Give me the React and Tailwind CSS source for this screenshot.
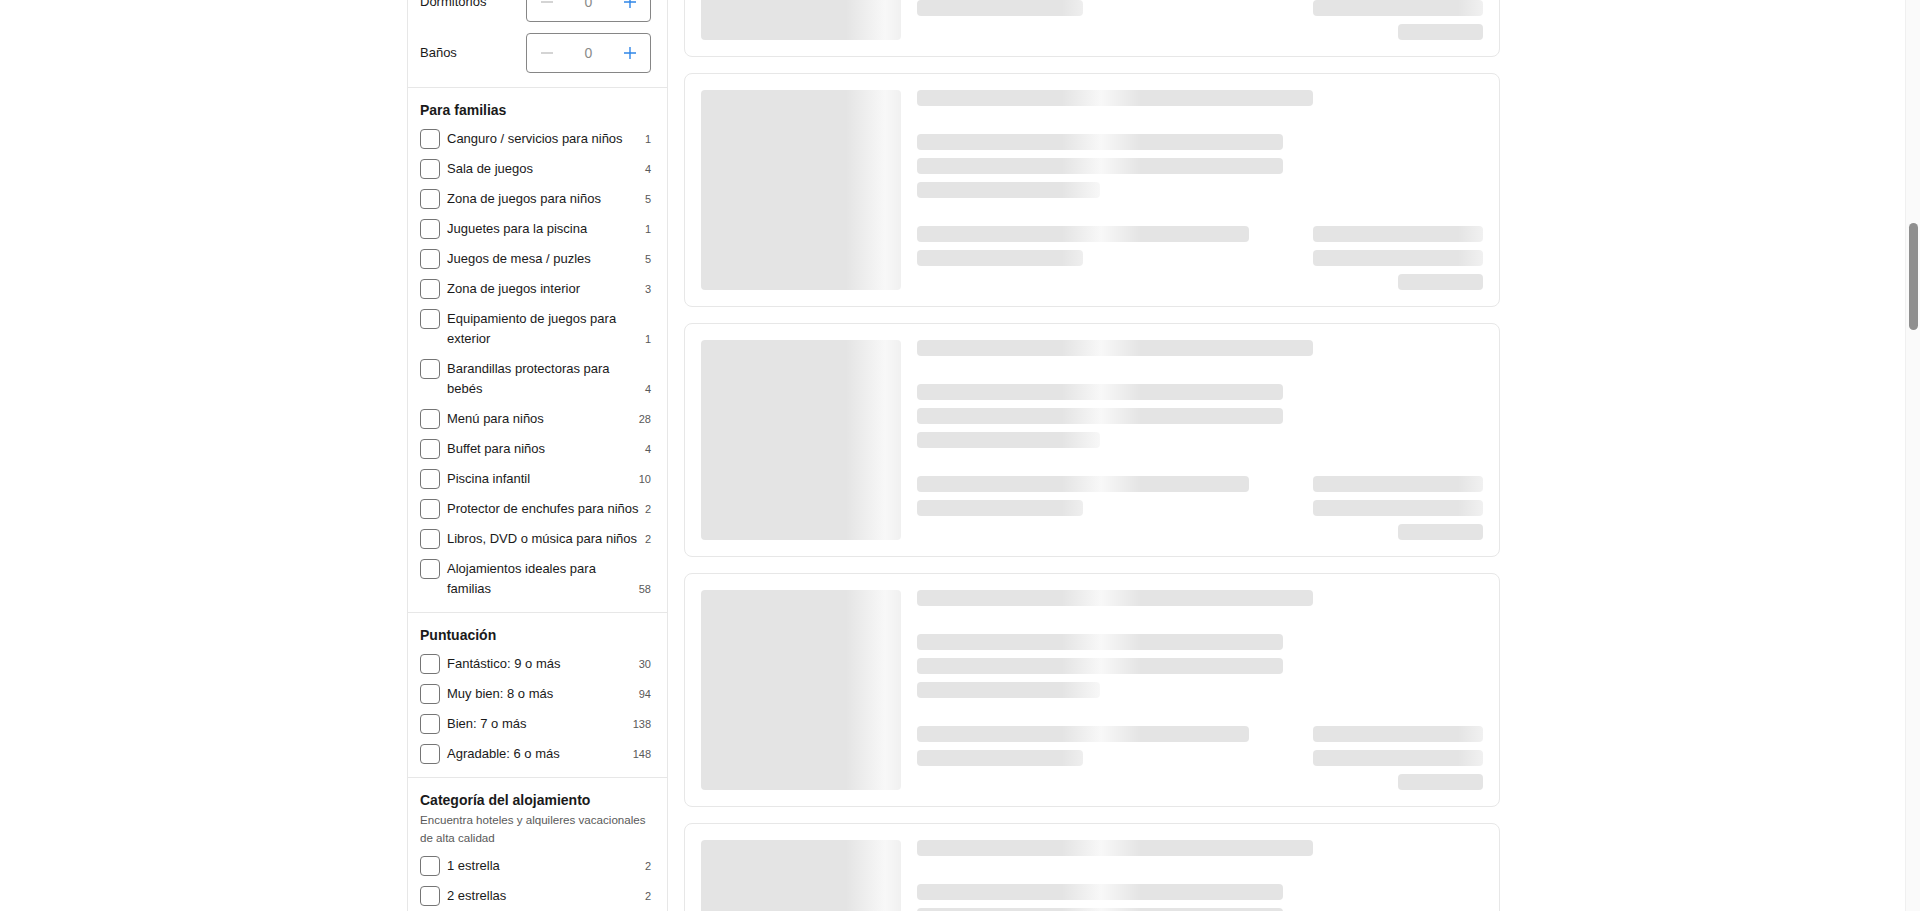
import React from "react";

const shimmer =
  "bg-[linear-gradient(90deg,#e4e4e4_0px,#e4e4e4_145px,#f8f8f8_184px,#e4e4e4_224px,#e4e4e4_100%)]";

const familias = [
  ["Canguro / servicios para niños", 1],
  ["Sala de juegos", 4],
  ["Zona de juegos para niños", 5],
  ["Juguetes para la piscina", 1],
  ["Juegos de mesa / puzles", 5],
  ["Zona de juegos interior", 3],
  ["Equipamiento de juegos para exterior", 1],
  ["Barandillas protectoras para bebés", 4],
  ["Menú para niños", 28],
  ["Buffet para niños", 4],
  ["Piscina infantil", 10],
  ["Protector de enchufes para niños", 2],
  ["Libros, DVD o música para niños", 2],
  ["Alojamientos ideales para familias", 58],
];

const puntuacion = [
  ["Fantástico: 9 o más", 30],
  ["Muy bien: 8 o más", 94],
  ["Bien: 7 o más", 138],
  ["Agradable: 6 o más", 148],
];

const categoria = [
  ["1 estrella", 2],
  ["2 estrellas", 2],
  ["3 estrellas", 14],
  ["4 estrellas", 31],
];

const Stepper = ({ label }) => (
  <div className="flex items-center justify-between">
    <span className="text-[13px] leading-5 text-[#1a1a1a]">{label}</span>
    <div className="flex h-10 w-[125px] items-center rounded-[4px] border border-[#868686]">
      <div className="flex w-10 justify-center">
        <svg width="14" height="14" viewBox="0 0 14 14">
          <path d="M1 7h12" stroke="#c2c2c2" strokeWidth="1.4" />
        </svg>
      </div>
      <div className="flex-1 text-center text-[14px] text-[#8a8a8a]">0</div>
      <div className="flex w-10 justify-center">
        <svg width="14" height="14" viewBox="0 0 14 14">
          <path d="M1 7h12M7 1v12" stroke="#2f86e8" strokeWidth="1.4" />
        </svg>
      </div>
    </div>
  </div>
);

const CheckRow = ({ label, count }) => (
  <label className="flex items-start gap-[7px]">
    <span className="h-5 w-5 shrink-0 rounded-[4px] border border-[#757575] bg-white" />
    <span className="flex flex-1 items-end justify-between">
      <span className="text-[13px] leading-5 text-[#1a1a1a]">{label}</span>
      <span className="shrink-0 pl-1 text-[11px] leading-5 text-[#595959]">{count}</span>
    </span>
  </label>
);

const FilterGroup = ({ title, desc, items, last }) => (
  <div className={`pl-3 pr-4 pt-3 ${last ? "pb-10" : "border-b border-[#e7e7e7] pb-[13px]"}`}>
    <h3 className="text-[14px] font-bold leading-5 text-[#1a1a1a]">{title}</h3>
    {desc && (
      <p className="mt-px text-[11.6px] leading-[18px] text-[#595959]">{desc}</p>
    )}
    <div className="mt-[9px] flex flex-col gap-[10px]">
      {items.map(([l, c]) => (
        <CheckRow key={l} label={l} count={c} />
      ))}
    </div>
  </div>
);

const SkeletonCard = () => (
  <div className="flex h-[234px] gap-4 rounded-lg border border-[#e7e7e7] bg-white p-4">
    <div className={`h-[200px] w-[200px] shrink-0 rounded-[4px] ${shimmer}`} />
    <div className="flex flex-1 flex-col">
      <div className={`h-4 w-[396px] rounded-[4px] ${shimmer}`} />
      <div className="mt-7 flex flex-col gap-2">
        <div className={`h-4 w-[366px] rounded-[4px] ${shimmer}`} />
        <div className={`h-4 w-[366px] rounded-[4px] ${shimmer}`} />
        <div className={`h-4 w-[183px] rounded-[4px] ${shimmer}`} />
      </div>
      <div className="mt-7 flex justify-between">
        <div className="flex flex-col gap-2">
          <div className={`h-4 w-[332px] rounded-[4px] ${shimmer}`} />
          <div className={`h-4 w-[166px] rounded-[4px] ${shimmer}`} />
        </div>
        <div className="flex flex-col items-end gap-2">
          <div className={`h-4 w-[170px] rounded-[4px] ${shimmer}`} />
          <div className={`h-4 w-[170px] rounded-[4px] ${shimmer}`} />
          <div className={`h-4 w-[85px] rounded-[4px] ${shimmer}`} />
        </div>
      </div>
    </div>
  </div>
);

export default function App() {
  return (
    <div className="flex h-[911px] overflow-hidden bg-white font-['Liberation_Sans',Arial,sans-serif]">
      <div className="flex-1 overflow-hidden pl-[2px]">
        <div className="mx-auto flex w-[1093px] items-start gap-4">
          <aside className="-mt-[18px] w-[261px] shrink-0 border-x border-[#e7e7e7]">
            <div className="flex flex-col gap-[11px] border-b border-[#e7e7e7] pb-[14px] pl-3 pr-4">
              <Stepper label="Dormitorios" />
              <Stepper label="Baños" />
            </div>
            <FilterGroup title="Para familias" items={familias} />
            <FilterGroup title="Puntuación" items={puntuacion} />
            <FilterGroup
              title="Categoría del alojamiento"
              desc="Encuentra hoteles y alquileres vacacionales de alta calidad"
              items={categoria}
              last
            />
          </aside>
          <main className="-mt-[177px] flex w-[816px] flex-col gap-4">
            {[0, 1, 2, 3, 4].map((i) => (
              <SkeletonCard key={i} />
            ))}
          </main>
        </div>
      </div>
      <div className="flex w-[15px] shrink-0 justify-center border-l border-[#f0f0f0] bg-[#fafafa]">
        <div className="mt-[223px] h-[107px] w-[9px] rounded-full bg-[#8f8f8f]" />
      </div>
    </div>
  );
}
